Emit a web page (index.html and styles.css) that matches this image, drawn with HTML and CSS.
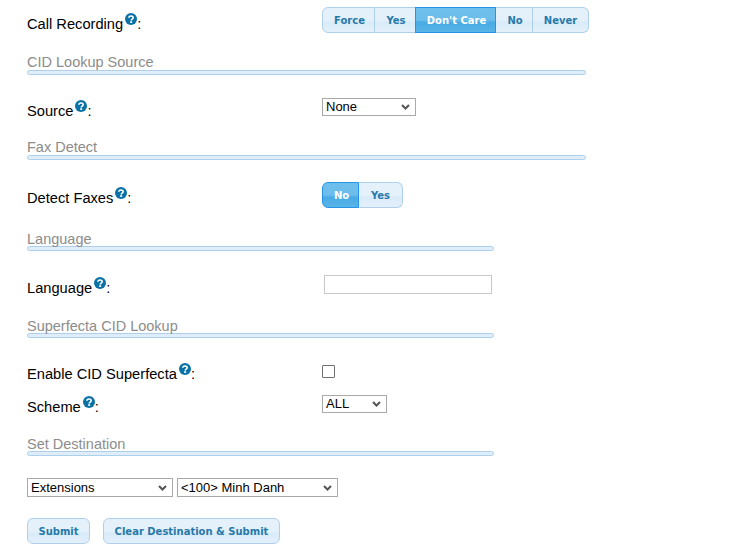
FILE: index.html
```html
<!DOCTYPE html>
<html lang="en">
<head>
<meta charset="utf-8">
<title>Inbound Route</title>
<link rel="stylesheet" href="styles.css">
</head>
<body>
<svg class="defs" width="0" height="0" aria-hidden="true">
  <symbol id="help" viewBox="0 0 12 12">
    <circle cx="6" cy="6" r="6" fill="#0b72a6"/>
    <path d="M3.9 4.7C3.9 3.5 4.8 3 6 3s2.2.6 2.2 1.7c0 1.5-2 1.4-2 2.8" fill="none" stroke="#fff" stroke-width="1.6"/>
    <rect x="5.2" y="8.2" width="1.9" height="1.7" fill="#fff"/>
  </symbol>
</svg>
<form class="page">
  <div class="row row-recording">
    <label class="label pad-9">Call Recording<svg class="help"><use href="#help"/></svg>:</label>
    <div class="buttonset">
      <span class="seg seg-force">Force</span><span class="seg seg-yes">Yes</span><span class="seg seg-care active">Don't Care</span><span class="seg seg-no">No</span><span class="seg seg-never">Never</span>
    </div>
  </div>

  <h3 class="heading m-21">CID Lookup Source</h3>
  <div class="rule rule-wide"></div>
  <div class="row m-23">
    <label class="label pad-5">Source<svg class="help"><use href="#help"/></svg>:</label>
    <select class="select select-source"><option>None</option></select>
  </div>

  <h3 class="heading m-20">Fax Detect</h3>
  <div class="rule rule-wide"></div>
  <div class="row m-22">
    <label class="label pad-8">Detect Faxes<svg class="help"><use href="#help"/></svg>:</label>
    <div class="buttonset">
      <span class="seg seg-fax-no active">No</span><span class="seg seg-fax-yes">Yes</span>
    </div>
  </div>

  <h3 class="heading heading-low m-22">Language</h3>
  <div class="rule"></div>
  <div class="row m-24">
    <label class="label pad-5">Language<svg class="help"><use href="#help"/></svg>:</label>
    <input class="text-input" type="text">
  </div>

  <h3 class="heading heading-low m-21">Superfecta CID Lookup</h3>
  <div class="rule"></div>
  <div class="row m-27">
    <label class="label pad-1">Enable CID Superfecta<svg class="help"><use href="#help"/></svg>:</label>
    <span class="checkbox"></span>
  </div>
  <div class="row m-13">
    <label class="label pad-4">Scheme<svg class="help"><use href="#help"/></svg>:</label>
    <select class="select select-scheme"><option>ALL</option></select>
  </div>

  <h3 class="heading heading-low m-20">Set Destination</h3>
  <div class="rule"></div>
  <div class="dest">
    <select class="select select-type"><option>Extensions</option></select>
    <select class="select select-ext"><option>&lt;100&gt; Minh Danh</option></select>
  </div>

  <div class="actions">
    <button class="btn btn-submit" type="button">Submit</button>
    <button class="btn btn-clear" type="button">Clear Destination &amp; Submit</button>
  </div>
</form>
</body>
</html>
```
FILE: styles.css
```css
* { box-sizing: border-box; }
html, body { margin: 0; padding: 0; background: #fff; }
body { font-family: "Liberation Sans", Arial, sans-serif; font-size: 14.67px; color: #000; }
.defs { display: block; height: 0; }
.page { padding: 7px 0 0 27px; }

.row { display: flex; align-items: flex-start; }
.label { display: block; width: 295px; flex: none; line-height: 16px; white-space: nowrap; }
.help { width: 12px; height: 12px; margin: -6px 0 -6px 2px; vertical-align: 10px; }
.pad-9 { padding-top: 9px; }
.pad-8 { padding-top: 8px; }
.pad-5 { padding-top: 5px; }
.pad-4 { padding-top: 4px; }
.pad-1 { padding-top: 1px; }

.m-13 { margin-top: 13px; }
.m-20 { margin-top: 20px; }
.m-21 { margin-top: 21px; }
.m-22 { margin-top: 22px; }
.m-23 { margin-top: 23px; }
.m-24 { margin-top: 24px; }
.m-27 { margin-top: 27px; }

.heading { margin-bottom: 0; height: 16px; font-size: 14.5px; line-height: 16px; font-weight: normal; color: #8c8c8c; }
.heading-low { line-height: 18px; }
.rule { width: 467px; height: 5px; border: 1px solid #aed0ea; border-radius: 3px; background: #deedf9; }
.rule-wide { width: 559px; }

.buttonset { display: flex; height: 26px; }
.seg {
  display: flex; align-items: center; justify-content: center;
  height: 26px; padding-left: 2px; border: 1px solid #aed0ea; border-left-width: 0;
  background: linear-gradient(#e4f1fb 0, #e4f1fb 50%, #d9ebf9 60%, #e3f0fa 100%);
  color: #2779aa; font-family: "DejaVu Sans", Verdana, sans-serif; font-size: 10px; font-weight: bold;
}
.seg:first-child { border-left-width: 1px; border-radius: 6px 0 0 6px; }
.seg:last-child { padding-left: 0; border-radius: 0 6px 6px 0; }
.seg.active {
  margin-left: -1px; border: 1px solid #2694e8; color: #fff;
  background: linear-gradient(#6fbfec 0, #6bbdeb 50%, #48abe4 60%, #59b4e8 100%);
}
.seg.active:first-child { margin-left: 0; }
.seg-force { width: 53px; }
.seg-yes { width: 41px; }
.seg-care { width: 81px; }
.seg-no { width: 37px; }
.seg-never { width: 56px; }
.seg-fax-no { width: 37px; }
.seg-fax-yes { width: 44px; }

.select {
  appearance: none; display: block; height: 18px; margin: 0; padding: 0 0 0 3px;
  border: 1px solid #a9a9a9; border-radius: 0;
  font-family: "Liberation Sans", Arial, sans-serif; font-size: 13px; line-height: 16px; color: #000;
  background: #fff url("data:image/svg+xml,%3Csvg xmlns='http://www.w3.org/2000/svg' width='9' height='6'%3E%3Cpath d='M1 1l3.5 3.5L8 1' fill='none' stroke='%23555' stroke-width='2'/%3E%3C/svg%3E") no-repeat right 5px center;
}
.select-source { width: 94px; }
.select-scheme { width: 65px; }
.select-type { width: 146px; height: 19px; padding-left: 3px; }
.select-ext { width: 161px; height: 19px; }

.text-input { display: block; width: 168px; height: 19px; margin: 0 0 0 2px; padding: 0; border: 1px solid #c8c8c8; background: #fff; }
.checkbox { display: block; width: 13px; height: 13px; border: 1px solid #707070; border-radius: 1px; background: #fff; }

.dest { display: flex; gap: 4px; margin-top: 22px; }
.actions { display: flex; gap: 13px; margin-top: 21px; }
.btn {
  height: 26px; margin: 0; padding: 0; border: 1px solid #aed0ea; border-radius: 6px;
  background: linear-gradient(#e4f1fb 0, #e4f1fb 50%, #d9ebf9 60%, #e3f0fa 100%);
  color: #2779aa; font-family: "DejaVu Sans", Verdana, sans-serif; font-size: 10px; font-weight: bold;
}
.btn-submit { width: 63px; }
.btn-clear { width: 177px; }
```
